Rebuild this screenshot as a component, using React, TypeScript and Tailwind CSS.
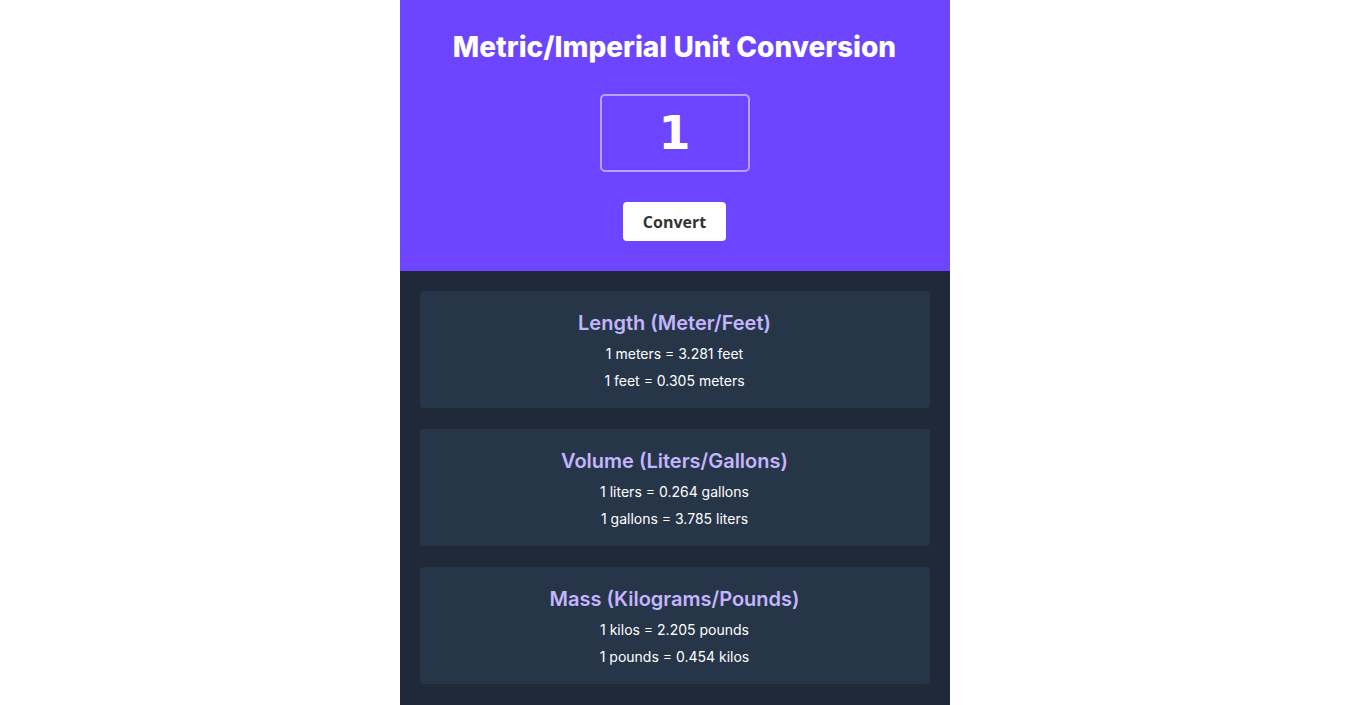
import React from "react";

const cards = [
  { title: "Length (Meter/Feet)", lines: ["1 meters = 3.281 feet", "1 feet = 0.305 meters"] },
  { title: "Volume (Liters/Gallons)", lines: ["1 liters = 0.264 gallons", "1 gallons = 3.785 liters"] },
  { title: "Mass (Kilograms/Pounds)", lines: ["1 kilos = 2.205 pounds", "1 pounds = 0.454 kilos"] },
];

export default function App() {
  return (
    <div className="min-h-screen bg-white flex justify-center" style={{ fontFamily: "Inter, sans-serif" }}>
      <div className="w-[550px] flex flex-col">
        <div className="bg-[#6d44ff] h-[271px] flex flex-col items-center pt-[30px]">
          <h1 className="text-white font-extrabold text-[28px] leading-[34px]">Metric/Imperial Unit Conversion</h1>
          <div className="mt-[30px] w-[150px] h-[78px] border-2 border-white/50 rounded-[5px] flex items-center justify-center">
            <span className="text-white font-bold text-[46px] leading-none" style={{ fontFamily: '"DejaVu Sans", sans-serif' }}>1</span>
          </div>
          <button className="mt-[30px] w-[103px] h-[39px] bg-white rounded-[4px] text-[#333] font-bold text-[16px]" style={{ fontFamily: '"Open Sans", sans-serif' }}>
            Convert
          </button>
        </div>
        <div className="bg-[#1f2937] flex flex-col gap-[21px] px-[20px] pt-[20px] pb-[21px]">
          {cards.map((c) => (
            <div key={c.title} className="bg-[#273549] rounded-[4px] h-[117px] flex flex-col items-center pt-[18px]">
              <h2 className="text-[#c4b5fd] font-semibold text-[20px] leading-[28px]">{c.title}</h2>
              <p className="mt-[7px] text-white text-[14px] leading-[20px]">{c.lines[0]}</p>
              <p className="mt-[7px] text-white text-[14px] leading-[20px]">{c.lines[1]}</p>
            </div>
          ))}
        </div>
      </div>
    </div>
  );
}
